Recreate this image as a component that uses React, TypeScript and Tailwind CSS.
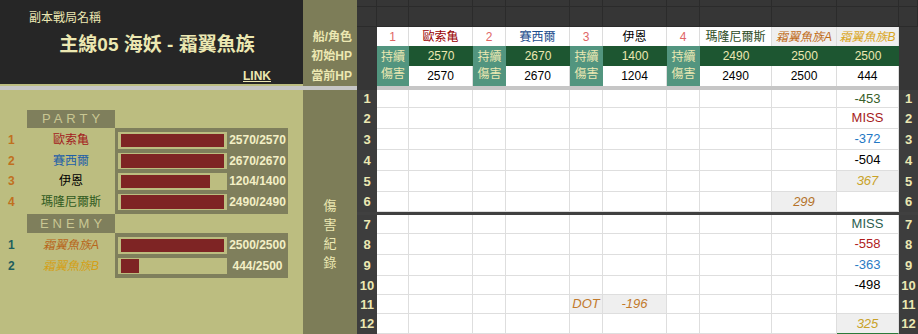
const PALE = "text-[#ece8b2]";

type Head = { t: string; c: string; hp?: string; cur?: string; alt?: boolean };

const HEAD: Head[] = [
  { t: "1", c: "text-[#e06666]" },
  { t: "歐索亀", c: "text-[#990000]", hp: "2570", cur: "2570" },
  { t: "2", c: "text-[#e06666]" },
  { t: "賽西爾", c: "text-[#1c4e8e]", hp: "2670", cur: "2670" },
  { t: "3", c: "text-[#e06666]" },
  { t: "伊恩", c: "text-black", hp: "1400", cur: "1204" },
  { t: "4", c: "text-[#e06666]" },
  { t: "瑪隆尼爾斯", c: "text-[#2b4b1c]", hp: "2490", cur: "2490" },
  { t: "霜翼魚族A", c: "italic text-[#bf6a16]", hp: "2500", cur: "2500", alt: true },
  { t: "霜翼魚族B", c: "italic text-[#d9a521]", hp: "2500", cur: "444", alt: true },
];

type Hit = { col: number; t: string; c: string; bg?: boolean };

// damage log, one entry list per row
const LOG: Hit[][] = [
  [{ col: 9, t: "-453", c: "text-[#38602a]" }],
  [{ col: 9, t: "MISS", c: "text-[#a61c1c]" }],
  [{ col: 9, t: "-372", c: "text-[#2377c4]" }],
  [{ col: 9, t: "-504", c: "text-black" }],
  [{ col: 9, t: "367", c: "italic text-[#c9a227]", bg: true }],
  [{ col: 8, t: "299", c: "italic text-[#b5732b]", bg: true }],
  [{ col: 9, t: "MISS", c: "text-[#2b5e50]" }],
  [{ col: 9, t: "-558", c: "text-[#b01c1c]" }],
  [{ col: 9, t: "-363", c: "text-[#2a7bc4]" }],
  [{ col: 9, t: "-498", c: "text-black" }],
  [
    { col: 4, t: "DOT", c: "italic text-[#c27a2c]", bg: true },
    { col: 5, t: "-196", c: "italic text-[#c27a2c]", bg: true },
  ],
  [{ col: 9, t: "325", c: "italic text-[#c9a227] border-b-[#2a7a3a]", bg: true }],
];

const PARTY = [
  { n: "1", name: "歐索亀", c: "text-[#a32020]", hp: 2570, max: 2570 },
  { n: "2", name: "賽西爾", c: "text-[#1f5fa8]", hp: 2670, max: 2670 },
  { n: "3", name: "伊恩", c: "text-black", hp: 1204, max: 1400 },
  { n: "4", name: "瑪隆尼爾斯", c: "text-[#2f5a1e]", hp: 2490, max: 2490 },
];

const ENEMY = [
  { n: "1", name: "霜翼魚族A", c: "italic text-[#b8651a]", hp: 2500, max: 2500 },
  { n: "2", name: "霜翼魚族B", c: "italic text-[#d4a017]", hp: 444, max: 2500 },
];

function TitlePanel() {
  return (
    <div className="w-[303px] h-[86px] flex flex-col bg-[#262626] border-b-2 border-[#bcbd80]">
      <div className={`pt-[10px] pl-[29px] text-[12px] leading-[16px] ${PALE}`}>副本戰局名稱</div>
      <div className={`mt-[7px] pl-[29px] pr-[18px] text-center text-[19px] leading-[24px] font-bold ${PALE}`}>
        主線05 海妖 - 霜翼魚族
      </div>
      <div className="mt-[12px] flex justify-end pr-[32px]">
        <a className={`text-[12px] leading-[14px] font-bold underline ${PALE}`}>LINK</a>
      </div>
    </div>
  );
}

function HeaderGrid() {
  const dark = "bg-[#363636] border-r border-b border-[#2b2b2b]";
  return (
    <div className="grid grid-cols-[54px_20px_32px_64px_33px_64px_33px_64px_33px_72px_65px_62px_19px] grid-rows-[7px_20px_19px_20px_20px] text-[12px]">
      <div className={`row-span-5 bg-[#7d7d58] flex flex-col pt-[27px] font-bold ${PALE}`}>
        <div className="h-[19px] flex items-center justify-end pr-[5px]">船/角色</div>
        <div className="h-[20px] flex items-center justify-end pr-[5px]">初始HP</div>
        <div className="h-[20px] flex items-center justify-end pr-[5px]">當前HP</div>
      </div>
      {Array.from({ length: 24 }).map((_, i) => (
        <div key={"d" + i} className={dark} />
      ))}

      <div className="bg-[#363636]" />
      {HEAD.map((h) => (
        <div
          key={h.t}
          className={`flex items-center justify-center border-r border-[#dcdcdc] ${h.alt ? "bg-[#efefef]" : "bg-white"} ${h.c}`}
        >
          {h.t}
        </div>
      ))}
      <div className="bg-[#363636]" />

      <div className="bg-[#363636]" />
      {HEAD.map((h) =>
        h.hp ? (
          <div key={"hp" + h.t} className={`bg-[#1d5631] flex items-center justify-center ${PALE}`}>
            {h.hp}
          </div>
        ) : (
          <div
            key={"dot" + h.t}
            className={`row-span-2 bg-[#52957f] flex flex-col items-center justify-center leading-[17px] ${PALE}`}
          >
            <span>持續</span>
            <span>傷害</span>
          </div>
        )
      )}
      <div className="bg-[#363636]" />

      <div className="bg-[#363636]" />
      {HEAD.filter((h) => h.hp).map((h) => (
        <div key={"cur" + h.t} className="bg-white border-r border-[#dcdcdc] flex items-center justify-center text-black">
          {h.cur}
        </div>
      ))}
      <div className="bg-[#363636]" />
    </div>
  );
}

function HpRows({ rows, numColor }: { rows: typeof PARTY; numColor: string }) {
  return (
    <div className="flex">
      <div className="w-[115px] flex flex-col py-[2px]">
        {rows.map((r) => (
          <div key={r.name} className="h-[20.5px] flex items-center text-[12px]">
            <span className={`w-[27px] pl-[8px] font-bold ${numColor}`}>{r.n}</span>
            <span className={`w-[88px] text-center ${r.c}`}>{r.name}</span>
          </div>
        ))}
      </div>
      <div className="w-[173px] bg-[#7f7f5c] flex flex-col py-[2px]">
        {rows.map((r) => (
          <div key={r.name} className="h-[20.5px] flex items-center">
            <div className="ml-[3px] w-[109px] h-[16.5px] bg-[#bcbd80] px-[3px] py-[1.5px]">
              <div className="h-full bg-[#7e2424]" style={{ width: `${(r.hp / r.max) * 100}%` }} />
            </div>
            <span className="flex-1 text-center text-[12px] font-bold text-[#f3efc5]">
              {r.hp}/{r.max}
            </span>
          </div>
        ))}
      </div>
    </div>
  );
}

function StatusPanel() {
  const tag = "ml-[27px] w-[88px] bg-[#7f7f5c] flex items-center justify-center text-[13px] tracking-[4px] pl-[4px] text-[#c9c793]";
  return (
    <div className="w-[303px] bg-[#bcbd80] flex flex-col pt-[20px]">
      <div className={`${tag} h-[18px]`}>PARTY</div>
      <HpRows rows={PARTY} numColor="text-[#c0701e]" />
      <div className={`${tag} h-[19px]`}>ENEMY</div>
      <HpRows rows={ENEMY} numColor="text-[#1e5e5e]" />
    </div>
  );
}

function DataGrid() {
  const num = `bg-[#3d3d3d] flex items-center justify-center text-[13px] font-bold ${PALE}`;
  return (
    <div className="grid grid-cols-[20px_32px_64px_33px_64px_33px_64px_33px_72px_65px_62px_19px] grid-rows-[18px_21px_21px_21px_21px_20px_3px_19px_21px_21px_19px_19px_20px] text-[13px]">
      {LOG.map((hits, i) => (
        <>
          <div key={"l" + i} className={num}>{i + 1}</div>
          {HEAD.map((_, c) => {
            const h = hits.find((x) => x.col === c);
            return (
              <div
                key={i + "-" + c}
                className={`border-r border-b border-[#dedede] flex items-center justify-center ${h?.bg ? "bg-[#efefef]" : "bg-white"} ${h ? h.c : ""}`}
              >
                {h?.t}
              </div>
            );
          })}
          <div key={"r" + i} className={num}>{i + 1}</div>
          {i === 5 && <div key="sep" className="col-span-12 bg-[#404040]" />}
        </>
      ))}
    </div>
  );
}

export default function App() {
  return (
    <div className="w-[918px] h-[334px] overflow-hidden flex flex-col bg-white font-['Liberation_Sans','Noto_Sans_CJK_TC',sans-serif]">
      <div className="flex h-[86px]">
        <TitlePanel />
        <HeaderGrid />
      </div>
      <div className="flex h-[4px]">
        <div className="w-[357px] bg-[#c6c6c6]" />
        <div className="w-[20px] bg-[#363636]" />
        <div className="w-[522px] bg-[#c6c6c6]" />
        <div className="w-[19px] bg-[#363636]" />
      </div>
      <div className="flex flex-1 min-h-0">
        <StatusPanel />
        <div className={`w-[54px] bg-[#7d7d58] flex flex-col items-center pt-[106px] text-[13px] leading-[19px] ${PALE}`}>
          <span>傷</span>
          <span>害</span>
          <span>紀</span>
          <span>錄</span>
        </div>
        <DataGrid />
      </div>
    </div>
  );
}
